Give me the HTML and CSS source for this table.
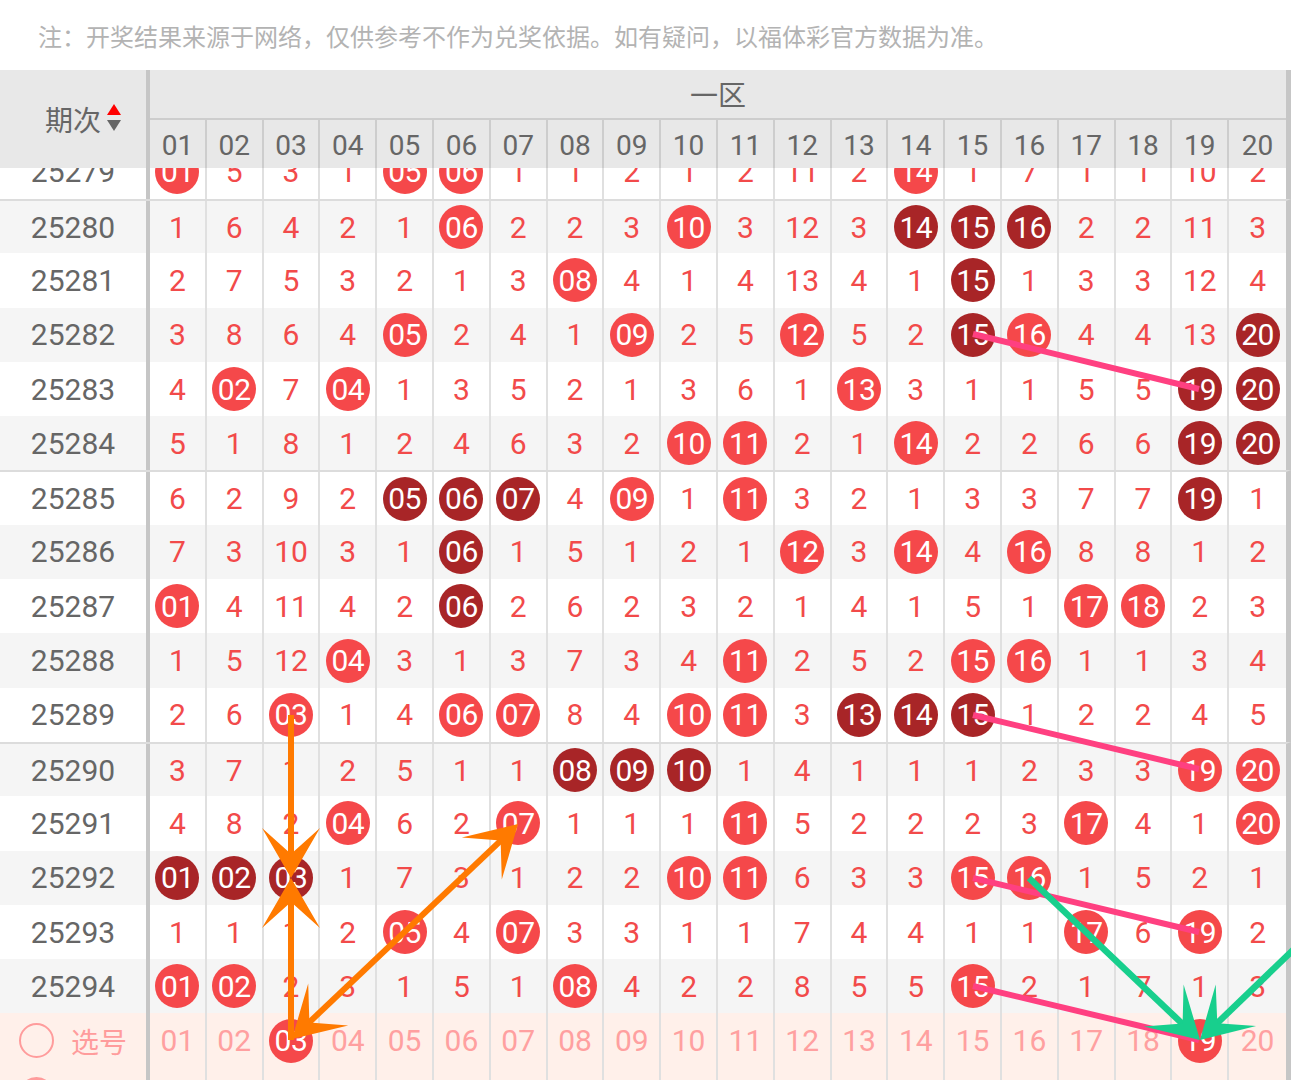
FILE: index.html
```html
<!DOCTYPE html>
<html lang="zh">
<head>
<meta charset="utf-8">
<title>走势图</title>
<link rel="stylesheet" href="styles.css">
</head>
<body>
<div class="notice">注：开奖结果来源于网络，仅供参考不作为兑奖依据。如有疑问，以福体彩官方数据为准。</div>
<div class="head">
  <div class="head-period"><span>期次</span><svg class="sort" width="16" height="30" viewBox="0 0 16 30"><polygon points="8,1 15,12 1,12" fill="#f00"/><polygon points="1,17 15,17 8,28" fill="#666"/></svg></div>
  <div class="head-nums">
    <div class="zone">一区</div>
    <div class="cols"><span>01</span><span>02</span><span>03</span><span>04</span><span>05</span><span>06</span><span>07</span><span>08</span><span>09</span><span>10</span><span>11</span><span>12</span><span>13</span><span>14</span><span>15</span><span>16</span><span>17</span><span>18</span><span>19</span><span>20</span></div>
  </div>
</div>
<div class="tbody">
  <div class="row first"><div class="p">25279</div><span><b>01</b></span><span>5</span><span>3</span><span>1</span><span><b>05</b></span><span><b>06</b></span><span>1</span><span>1</span><span>2</span><span>1</span><span>2</span><span>11</span><span>2</span><span><b>14</b></span><span>1</span><span>7</span><span>1</span><span>1</span><span>10</span><span>2</span></div>
  <div class="row g sep"><div class="p">25280</div><span>1</span><span>6</span><span>4</span><span>2</span><span>1</span><span><b>06</b></span><span>2</span><span>2</span><span>3</span><span><b>10</b></span><span>3</span><span>12</span><span>3</span><span><b class="d">14</b></span><span><b class="d">15</b></span><span><b class="d">16</b></span><span>2</span><span>2</span><span>11</span><span>3</span></div>
  <div class="row"><div class="p">25281</div><span>2</span><span>7</span><span>5</span><span>3</span><span>2</span><span>1</span><span>3</span><span><b>08</b></span><span>4</span><span>1</span><span>4</span><span>13</span><span>4</span><span>1</span><span><b class="d">15</b></span><span>1</span><span>3</span><span>3</span><span>12</span><span>4</span></div>
  <div class="row g"><div class="p">25282</div><span>3</span><span>8</span><span>6</span><span>4</span><span><b>05</b></span><span>2</span><span>4</span><span>1</span><span><b>09</b></span><span>2</span><span>5</span><span><b>12</b></span><span>5</span><span>2</span><span><b class="d">15</b></span><span><b>16</b></span><span>4</span><span>4</span><span>13</span><span><b class="d">20</b></span></div>
  <div class="row"><div class="p">25283</div><span>4</span><span><b>02</b></span><span>7</span><span><b>04</b></span><span>1</span><span>3</span><span>5</span><span>2</span><span>1</span><span>3</span><span>6</span><span>1</span><span><b>13</b></span><span>3</span><span>1</span><span>1</span><span>5</span><span>5</span><span><b class="d">19</b></span><span><b class="d">20</b></span></div>
  <div class="row g"><div class="p">25284</div><span>5</span><span>1</span><span>8</span><span>1</span><span>2</span><span>4</span><span>6</span><span>3</span><span>2</span><span><b>10</b></span><span><b>11</b></span><span>2</span><span>1</span><span><b>14</b></span><span>2</span><span>2</span><span>6</span><span>6</span><span><b class="d">19</b></span><span><b class="d">20</b></span></div>
  <div class="row sep"><div class="p">25285</div><span>6</span><span>2</span><span>9</span><span>2</span><span><b class="d">05</b></span><span><b class="d">06</b></span><span><b class="d">07</b></span><span>4</span><span><b>09</b></span><span>1</span><span><b>11</b></span><span>3</span><span>2</span><span>1</span><span>3</span><span>3</span><span>7</span><span>7</span><span><b class="d">19</b></span><span>1</span></div>
  <div class="row g"><div class="p">25286</div><span>7</span><span>3</span><span>10</span><span>3</span><span>1</span><span><b class="d">06</b></span><span>1</span><span>5</span><span>1</span><span>2</span><span>1</span><span><b>12</b></span><span>3</span><span><b>14</b></span><span>4</span><span><b>16</b></span><span>8</span><span>8</span><span>1</span><span>2</span></div>
  <div class="row"><div class="p">25287</div><span><b>01</b></span><span>4</span><span>11</span><span>4</span><span>2</span><span><b class="d">06</b></span><span>2</span><span>6</span><span>2</span><span>3</span><span>2</span><span>1</span><span>4</span><span>1</span><span>5</span><span>1</span><span><b>17</b></span><span><b>18</b></span><span>2</span><span>3</span></div>
  <div class="row g"><div class="p">25288</div><span>1</span><span>5</span><span>12</span><span><b>04</b></span><span>3</span><span>1</span><span>3</span><span>7</span><span>3</span><span>4</span><span><b>11</b></span><span>2</span><span>5</span><span>2</span><span><b>15</b></span><span><b>16</b></span><span>1</span><span>1</span><span>3</span><span>4</span></div>
  <div class="row"><div class="p">25289</div><span>2</span><span>6</span><span><b>03</b></span><span>1</span><span>4</span><span><b>06</b></span><span><b>07</b></span><span>8</span><span>4</span><span><b>10</b></span><span><b>11</b></span><span>3</span><span><b class="d">13</b></span><span><b class="d">14</b></span><span><b class="d">15</b></span><span>1</span><span>2</span><span>2</span><span>4</span><span>5</span></div>
  <div class="row g sep"><div class="p">25290</div><span>3</span><span>7</span><span>1</span><span>2</span><span>5</span><span>1</span><span>1</span><span><b class="d">08</b></span><span><b class="d">09</b></span><span><b class="d">10</b></span><span>1</span><span>4</span><span>1</span><span>1</span><span>1</span><span>2</span><span>3</span><span>3</span><span><b>19</b></span><span><b>20</b></span></div>
  <div class="row"><div class="p">25291</div><span>4</span><span>8</span><span>2</span><span><b>04</b></span><span>6</span><span>2</span><span><b>07</b></span><span>1</span><span>1</span><span>1</span><span><b>11</b></span><span>5</span><span>2</span><span>2</span><span>2</span><span>3</span><span><b>17</b></span><span>4</span><span>1</span><span><b>20</b></span></div>
  <div class="row g"><div class="p">25292</div><span><b class="d">01</b></span><span><b class="d">02</b></span><span><b class="d">03</b></span><span>1</span><span>7</span><span>3</span><span>1</span><span>2</span><span>2</span><span><b>10</b></span><span><b>11</b></span><span>6</span><span>3</span><span>3</span><span><b>15</b></span><span><b>16</b></span><span>1</span><span>5</span><span>2</span><span>1</span></div>
  <div class="row"><div class="p">25293</div><span>1</span><span>1</span><span>1</span><span>2</span><span><b>05</b></span><span>4</span><span><b>07</b></span><span>3</span><span>3</span><span>1</span><span>1</span><span>7</span><span>4</span><span>4</span><span>1</span><span>1</span><span><b>17</b></span><span>6</span><span><b>19</b></span><span>2</span></div>
  <div class="row g"><div class="p">25294</div><span><b>01</b></span><span><b>02</b></span><span>2</span><span>3</span><span>1</span><span>5</span><span>1</span><span><b>08</b></span><span>4</span><span>2</span><span>2</span><span>8</span><span>5</span><span>5</span><span><b>15</b></span><span>2</span><span>1</span><span>7</span><span>1</span><span>3</span></div>
  <div class="row pick"><div class="p pick-p"><i class="ring"></i><em>选号</em></div><span>01</span><span>02</span><span><b>03</b></span><span>04</span><span>05</span><span>06</span><span>07</span><span>08</span><span>09</span><span>10</span><span>11</span><span>12</span><span>13</span><span>14</span><span>15</span><span>16</span><span>17</span><span>18</span><span><b>19</b></span><span>20</span></div>
  <div class="row pick"><div class="p pick-p"><i class="ring full"></i></div><span></span><span></span><span></span><span></span><span></span><span></span><span></span><span></span><span></span><span></span><span></span><span></span><span></span><span></span><span></span><span></span><span></span><span></span><span></span><span></span></div>
</div>
<svg class="overlay" width="1291" height="1080" viewBox="0 0 1291 1080">
  <g stroke="#ff4081" stroke-width="6" fill="none">
    <line x1="973" y1="334" x2="1199" y2="389"/>
    <line x1="973" y1="715" x2="1199" y2="769"/>
    <line x1="973" y1="878" x2="1199" y2="932"/>
    <line x1="973" y1="986" x2="1199" y2="1040"/>
  </g>
  <g stroke="#ff7a00" stroke-width="6" fill="none">
    <line x1="291" y1="715" x2="291" y2="870"/>
    <line x1="291" y1="1040" x2="291" y2="886"/>
    <line x1="512" y1="830" x2="298" y2="1033"/>
  </g>
  <g fill="#ff7a00">
    <polygon points="291,878 262,828 291,854 320,828"/>
    <polygon points="291,878 320,928 291,902 262,928"/>
    <polygon points="518,824 501.8,879.5 500.6,840.5 461.8,837.5"/>
    <polygon points="292,1039 308.2,983.5 309.4,1022.5 348.2,1025.5"/>
  </g>
  <g stroke="#18cf8d" stroke-width="6.5" fill="none">
    <line x1="1029" y1="878" x2="1192" y2="1033"/>
    <line x1="1344" y1="901" x2="1207" y2="1033"/>
  </g>
  <g fill="#18cf8d">
    <polygon points="1200,1040 1143.8,1026.6 1182.6,1023.5 1183.6,984.6"/>
    <polygon points="1200,1040 1215.7,984.4 1217.3,1023.3 1256.1,1026"/>
  </g>
</svg>
</body>
</html>
```

FILE: styles.css
```css
* {
  box-sizing: border-box;
  margin: 0;
  padding: 0;
}

html, body {
  width: 1291px;
  height: 1080px;
  overflow: hidden;
}

body {
  position: relative;
  background: #fff;
  font-family: Roboto, "Noto Sans CJK SC", sans-serif;
}

.notice {
  height: 70px;
  display: flex;
  align-items: center;
  padding-left: 38px;
  font-family: "Noto Sans CJK SC", sans-serif;
  font-size: 24px;
  color: #b3b3b3;
  white-space: nowrap;
}

.head {
  display: flex;
  height: 98px;
  background: #e8e8e8;
}

.head-period {
  width: 150px;
  flex: none;
  border-right: 4px solid #c6c6c6;
  display: flex;
  align-items: center;
  padding-left: 45px;
  gap: 5px;
  font-family: "Noto Sans CJK SC", sans-serif;
  font-size: 28px;
  color: #666;
}

.sort {
  display: block;
  margin-top: -2px;
}

.head-nums {
  flex: 1;
  display: flex;
  flex-direction: column;
  border-right: 5px solid #c6c6c6;
}

.zone {
  height: 50px;
  flex: none;
  border-bottom: 2px solid #cdcdcd;
  display: flex;
  align-items: center;
  justify-content: center;
  font-family: "Noto Sans CJK SC", sans-serif;
  font-size: 28px;
  color: #666;
}

.cols {
  flex: 1;
  display: grid;
  grid-template-columns: repeat(20, 1fr);
}

.cols span {
  border-right: 2px solid #cdcdcd;
  display: flex;
  align-items: center;
  justify-content: center;
  font-size: 28px;
  color: #666;
  padding-top: 2px;
}

.cols span:last-child {
  border-right: none;
}

.tbody {
  height: 912px;
  overflow: hidden;
}

.row {
  display: grid;
  grid-template-columns: 150px repeat(20, 1fr);
  height: 54.3px;
  background: #fff;
  border-right: 5px solid #c6c6c6;
}

.row.g {
  background: #f5f5f5;
}

.row.sep {
  border-top: 2px solid #dcdcdc;
}

.row.first {
  margin-top: -23.3px;
}

.p {
  border-right: 4px solid #c6c6c6;
  display: flex;
  align-items: center;
  justify-content: center;
  font-size: 30px;
  color: #666;
}

.row > span {
  border-right: 2px solid #e0e0e0;
  display: flex;
  align-items: center;
  justify-content: center;
  font-size: 30px;
  color: #f24a4a;
}

.row > span:last-child {
  border-right: none;
}

.row b {
  width: 44px;
  height: 44px;
  border-radius: 50%;
  background: #f5484a;
  color: #fff;
  font-weight: normal;
  font-size: 30px;
  display: flex;
  align-items: center;
  justify-content: center;
  letter-spacing: -0.5px;
}

.row b.d {
  background: #a82527;
}

.row.pick {
  background: #fff0ea;
}

.row.pick > span {
  color: #ffa0a0;
}

.pick-p {
  justify-content: flex-start;
  padding-left: 19px;
  gap: 17px;
}

.ring {
  display: block;
  width: 35px;
  height: 35px;
  border-radius: 50%;
  border: 2.5px solid #ff9c9c;
}

.ring.full {
  background: #ff9c9c;
}

.pick-p em {
  font-style: normal;
  font-family: "Noto Sans CJK SC", sans-serif;
  font-size: 28px;
  color: #ff9c9c;
}

.overlay {
  position: absolute;
  left: 0;
  top: 0;
  pointer-events: none;
}
```
